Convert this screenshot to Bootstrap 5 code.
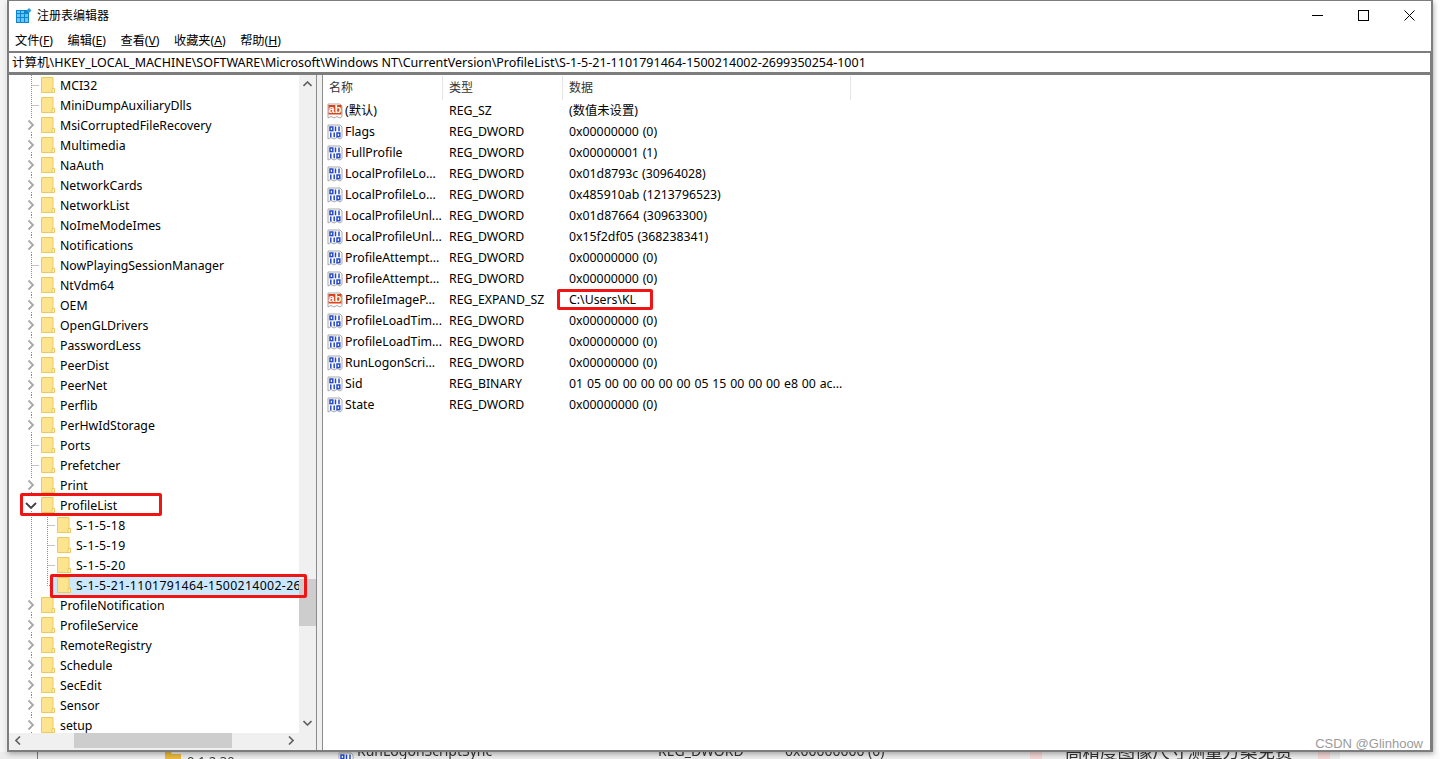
<!DOCTYPE html>
<html lang="zh-CN">

<head>
    <meta charset="UTF-8">
    <title>注册表编辑器</title>
    <link href="https://cdn.jsdelivr.net/npm/bootstrap@5.3.0/dist/css/bootstrap.min.css" rel="stylesheet">
    <style>
        html, body {
            height: 759px;
            overflow: hidden;
        }

        body {
            background: #fff;
            color: #000;
            font: 12.3px/20px "Noto Sans", "Noto Sans CJK SC", sans-serif;
        }

        .page-wrap {
            height: 759px;
            background: linear-gradient(90deg, #f4f4f4 0, #f4f4f4 6px, #fff 6px);
        }

        .reg-window {
            position: relative;
            z-index: 1;
            width: 1426px;
            height: 752px;
            margin-left: 7px;
            background: #f0f0f0;
            border: 2px solid #7d7d7d;
            border-top-width: 1px;
            box-shadow: 1px 2px 5px rgba(0, 0, 0, .3);
        }

        .title-bar {
            height: 30px;
            background: #fff;
            padding-left: 7px;
        }

        .title-text {
            margin-left: 5px;
            font-size: 12px;
        }

        .win-btn {
            width: 46px;
            height: 28px;
        }

        .win-controls {
            margin-right: -1px;
        }

        .menu-bar {
            height: 20px;
            background: #fff;
            padding-left: 6px;
            gap: 14.5px;
            font-size: 12.2px;
        }

        .addr-bar {
            height: 24px;
            background: #fff;
            border-top: 2px solid #7d7d7d;
            border-bottom: 3px solid #7d7d7d;
            border-right: 1px solid #7d7d7d;
            padding-left: 3px;
            line-height: 19px;
            font-size: 12.5px;
            white-space: nowrap;
        }

        .panes {
            height: 675px;
        }

        .tree-pane {
            width: 308px;
            background: #f0f0f0;
            border-right: 1px solid #8c8c8c;
        }

        .tree-body {
            height: 658px;
            overflow: hidden;
        }

        .tree-list {
            width: 290px;
            background: #fff;
            overflow: hidden;
        }

        .tree-row {
            height: 20px;
            white-space: nowrap;
            overflow: hidden;
        }

        .tree-indent {
            flex: 0 0 14px;
        }

        .tree-row svg {
            flex: none;
        }

        .gap-root {
            flex: 0 0 2px;
        }

        .gap-child {
            flex: 0 0 8px;
        }

        .gap-one {
            flex: 0 0 1px;
        }

        .tree-label {
            padding-left: 3px;
            padding-right: 3px;
            margin-left: 2px;
            margin-top: 2px;
        }

        .row-sid .tree-label {
            letter-spacing: .35px;
        }

        .row-selected {
            flex: 1;
            background: #cce8ff;
            height: 20px;
            min-width: 0;
            overflow: hidden;
            padding-left: 6px;
        }

        .vert-scroll {
            width: 17px;
            background: #f0f0f0;
        }

        .vert-track {
            flex: 1;
            padding-top: 487px;
        }

        .vert-thumb {
            height: 47px;
            background: #cdcdcd;
        }

        .scroll-arrow {
            width: 17px;
            height: 17px;
            flex: none;
        }

        .vert-scroll .arrow-down {
            margin-bottom: 2px;
        }

        .horz-scroll {
            height: 17px;
            background: #f0f0f0;
            padding-right: 17px;
        }

        .horz-scroll .scroll-arrow {
            height: 15px;
        }

        .horz-track {
            flex: 1;
            padding-left: 48px;
        }

        .horz-thumb {
            width: 158px;
            height: 15px;
            background: #cdcdcd;
        }

        .splitter {
            width: 5px;
            flex: none;
        }

        .list-pane {
            flex: 1;
            background: #fff;
            border-left: 1px solid #8c8c8c;
            border-right: 1px solid #7d7d7d;
            padding-top: 1px;
        }

        .list-head {
            height: 24px;
            line-height: 23px;
            color: #333;
            font-size: 12px;
        }

        .col-name {
            width: 120px;
            padding-left: 6px;
        }

        .col-type {
            width: 120px;
            padding-left: 6px;
        }

        .col-data {
            width: 288px;
            padding-left: 6px;
        }

        .list-head > div {
            border-right: 1px solid #e5e5e5;
        }

        .list-head > div,
        .list-row > div {
            flex: none;
        }

        .list-row {
            height: 21px;
            line-height: 21px;
            white-space: nowrap;
            font-size: 12.3px;
        }

        .list-row .col-name {
            padding-left: 4px;
            gap: 2px;
        }

        .list-row .col-data {
            word-spacing: .65px;
        }

        .list-row svg {
            flex: none;
        }

        .mark-box {
            position: absolute;
            border: 3px solid #f01414;
            border-radius: 2px;
            pointer-events: none;
        }

        .mark-tree-a {
            left: 11px;
            top: 492px;
            width: 142px;
            height: 23px;
        }

        .mark-tree-b {
            left: 41px;
            top: 573px;
            width: 257px;
            height: 24px;
        }

        .mark-list {
            left: 548px;
            top: 288px;
            width: 96px;
            height: 21px;
        }

        .watermark {
            position: absolute;
            right: 8px;
            bottom: -2px;
            color: #9b9b9b;
            font: 13px/17px "Liberation Sans", sans-serif;
        }

        .behind-strip {
            height: 7px;
            background: linear-gradient(90deg, #ececec 0, #ececec 1340px, #fbfbfb 1340px);
            overflow: hidden;
            font: 14px/14px "Noto Sans", "Noto Sans CJK SC", sans-serif;
            color: #333;
            filter: blur(.5px);
        }

        .behind-strip > * {
            flex: none;
            white-space: nowrap;
        }

        .behind-strip > span {
            margin-top: -8px;
        }

        .strip-line {
            margin-left: 37px;
            width: 128px;
            border-left: 1px solid #777;
        }

        .strip-folder {
            width: 173px;
        }

        .strip-folder b {
            margin-left: 6px;
            font-weight: 400;
            font-size: 13px;
            line-height: 14px;
            position: relative;
            top: 2px;
        }

        .strip-bin { width: 19px; }
        .strip-b { width: 301px; }
        .strip-c { width: 127px; }
        .strip-d { width: 245px; }
        .strip-e { width: 253px; font-size: 17.5px; }

        .strip-pink {
            width: 12px;
            height: 7px;
            background: #f3d5d5;
        }

        .strip-space {
            width: 23px;
        }
    </style>
</head>

<body>
    <div class="page-wrap">
        <div class="reg-window d-flex flex-column">

            <!-- Title bar -->
            <div class="title-bar d-flex align-items-center">
                <svg width="16" height="16" viewBox="0 0 16 16">
                    <rect x="0" y="2" width="13" height="13" fill="#0c86d0" />
                    <path d="M1 6h3v3H1zM5 6h3v3H5zM9 6h3v3H9zM1 10h3v4H1zM5 10h3v4H5zM9 10h3v4H9zM1 3h3v2H1zM5 3h3v2H5z" fill="#6cc5f2" />
                    <path d="M13 0l2.500 2.500L13 5l-2.500-2.500z" fill="#2a9fe0" />
                </svg>
                <span class="title-text">注册表编辑器</span>
                <div class="win-controls d-flex ms-auto align-self-start">
                    <div class="win-btn d-flex align-items-center justify-content-center">
                        <svg width="11" height="11" viewBox="0 0 11 11"><path d="M0 5.500h11" stroke="#000" /></svg>
                    </div>
                    <div class="win-btn d-flex align-items-center justify-content-center">
                        <svg width="11" height="11" viewBox="0 0 11 11"><rect x=".5" y=".5" width="10" height="10" fill="none" stroke="#000" /></svg>
                    </div>
                    <div class="win-btn d-flex align-items-center justify-content-center">
                        <svg width="11" height="11" viewBox="0 0 11 11"><path d="M.5.500l10 10M10.500.500l-10 10" stroke="#000" /></svg>
                    </div>
                </div>
            </div>

            <!-- Menu -->
            <div class="menu-bar d-flex align-items-center">
                <span>文件(<u>F</u>)</span>
                <span>编辑(<u>E</u>)</span>
                <span>查看(<u>V</u>)</span>
                <span>收藏夹(<u>A</u>)</span>
                <span>帮助(<u>H</u>)</span>
            </div>

            <!-- Address -->
            <div class="addr-bar">计算机\HKEY_LOCAL_MACHINE\SOFTWARE\Microsoft\Windows NT\CurrentVersion\ProfileList\S-1-5-21-1101791464-1500214002-2699350254-1001</div>

            <div class="panes d-flex">
                <!-- Key tree -->
                <div class="tree-pane d-flex flex-column">
                    <div class="tree-body d-flex">
                        <div class="tree-list" id="treeList"></div>
                        <div class="vert-scroll d-flex flex-column">
                            <div class="scroll-arrow d-flex align-items-center justify-content-center">
                                <svg width="9" height="6" viewBox="0 0 9 6"><path d="M.5 5l4-4 4 4" fill="none" stroke="#606060" stroke-width="1.600" /></svg>
                            </div>
                            <div class="vert-track"><div class="vert-thumb"></div></div>
                            <div class="scroll-arrow arrow-down d-flex align-items-center justify-content-center">
                                <svg width="9" height="6" viewBox="0 0 9 6"><path d="M.5 1l4 4 4-4" fill="none" stroke="#606060" stroke-width="1.600" /></svg>
                            </div>
                        </div>
                    </div>
                    <div class="horz-scroll d-flex">
                        <div class="scroll-arrow d-flex align-items-center justify-content-center">
                            <svg width="6" height="9" viewBox="0 0 6 9"><path d="M5 .500l-4 4 4 4" fill="none" stroke="#606060" stroke-width="1.600" /></svg>
                        </div>
                        <div class="horz-track"><div class="horz-thumb"></div></div>
                        <div class="scroll-arrow d-flex align-items-center justify-content-center">
                            <svg width="6" height="9" viewBox="0 0 6 9"><path d="M1 .500l4 4-4 4" fill="none" stroke="#606060" stroke-width="1.600" /></svg>
                        </div>
                    </div>
                </div>

                <div class="splitter"></div>

                <!-- Values -->
                <div class="list-pane">
                    <div class="list-head d-flex">
                        <div class="col-name">名称</div>
                        <div class="col-type">类型</div>
                        <div class="col-data">数据</div>
                    </div>
                    <div id="valueList"></div>
                </div>
            </div>

            <div class="mark-box mark-tree-a"></div>
            <div class="mark-box mark-tree-b"></div>
            <div class="mark-box mark-list"></div>
            <div class="watermark">CSDN @Glinhoow</div>
        </div>

        <!-- Whatever is behind the window -->
        <div class="behind-strip d-flex" id="behindStrip">
            <div class="strip-line"></div>
            <div class="strip-folder d-flex align-items-start">
                <svg width="16" height="7" viewBox="0 0 16 7"><path d="M0 0h6l1 2h9v5H0z" fill="#e9b93c" /></svg>
                <b>0.1.2.30</b>
            </div>
            <div class="strip-bin" id="stripBin"></div>
            <span class="strip-b">RunLogonScriptSync</span>
            <span class="strip-c">REG_DWORD</span>
            <span class="strip-d">0x00000000 (0)</span>
            <div class="strip-pink"></div>
            <div class="strip-space"></div>
            <span class="strip-e">高精度图像尺寸测量方案免费</span>
            <div class="strip-pink"></div>
        </div>
    </div>

    <script>
        // type: 1 = has children, 0 = leaf, 2 = expanded, 3 = child key, 4 = selected child key
        const treeData = [
            ["MCI32", 0], ["MiniDumpAuxiliaryDlls", 0], ["MsiCorruptedFileRecovery", 1], ["Multimedia", 1],
            ["NaAuth", 1], ["NetworkCards", 1], ["NetworkList", 1], ["NoImeModeImes", 1], ["Notifications", 1],
            ["NowPlayingSessionManager", 0], ["NtVdm64", 1], ["OEM", 1], ["OpenGLDrivers", 1], ["PasswordLess", 1],
            ["PeerDist", 1], ["PeerNet", 1], ["Perflib", 1], ["PerHwIdStorage", 1], ["Ports", 0], ["Prefetcher", 0],
            ["Print", 1], ["ProfileList", 2], ["S-1-5-18", 3], ["S-1-5-19", 3], ["S-1-5-20", 3],
            ["S-1-5-21-1101791464-1500214002-2699350254-1001", 4], ["ProfileNotification", 1], ["ProfileService", 1],
            ["RemoteRegistry", 1], ["Schedule", 1], ["SecEdit", 1], ["Sensor", 1], ["setup", 1]
        ];

        const valueData = [
            ["(默认)", "REG_SZ", "(数值未设置)", "ab"],
            ["Flags", "REG_DWORD", "0x00000000 (0)", "bin"],
            ["FullProfile", "REG_DWORD", "0x00000001 (1)", "bin"],
            ["LocalProfileLo...", "REG_DWORD", "0x01d8793c (30964028)", "bin"],
            ["LocalProfileLo...", "REG_DWORD", "0x485910ab (1213796523)", "bin"],
            ["LocalProfileUnl...", "REG_DWORD", "0x01d87664 (30963300)", "bin"],
            ["LocalProfileUnl...", "REG_DWORD", "0x15f2df05 (368238341)", "bin"],
            ["ProfileAttempt...", "REG_DWORD", "0x00000000 (0)", "bin"],
            ["ProfileAttempt...", "REG_DWORD", "0x00000000 (0)", "bin"],
            ["ProfileImageP...", "REG_EXPAND_SZ", "C:\\Users\\KL", "ab"],
            ["ProfileLoadTim...", "REG_DWORD", "0x00000000 (0)", "bin"],
            ["ProfileLoadTim...", "REG_DWORD", "0x00000000 (0)", "bin"],
            ["RunLogonScri...", "REG_DWORD", "0x00000000 (0)", "bin"],
            ["Sid", "REG_BINARY", "01 05 00 00 00 00 00 05 15 00 00 00 e8 00 ac...", "bin"],
            ["State", "REG_DWORD", "0x00000000 (0)", "bin"]
        ];

        const dots = '#8a8a8a';

        const folderIcon =
            '<svg width="14" height="16" viewBox="0 0 14 16">' +
            '<path d="M.5.500h11.500v15H.5z" fill="#fde48f" stroke="#efc85a"/>' +
            '<path d="M11 15.500v-4h2.500v4z" fill="#fff2c4" stroke="#efc85a"/>' +
            '</svg>';

        // root level connector: dotted line at the middle, chevron on keys with children
        function rootTwisty(type) {
            let inner = '';
            if (type === 0) {
                inner = `<path d="M8.500 0v20M8.500 10.500h7" stroke="${dots}" stroke-dasharray="1 1"/>`;
            } else if (type === 1) {
                inner = `<path d="M8.500 0v3M8.500 17v3" stroke="${dots}" stroke-dasharray="1 1"/>` +
                    '<path d="M5.500 5.500l4.500 4.500-4.500 4.500" fill="none" stroke="#a6a6a6" stroke-width="1.800"/>';
            } else if (type === 2) {
                inner = '<path d="M3 8l5 5 5-5" fill="none" stroke="#404040" stroke-width="1.800"/>' +
                    `<path d="M8.500 16v4" stroke="${dots}" stroke-dasharray="1 1"/>`;
            } else {
                inner = `<path d="M8.500 0v20" stroke="${dots}" stroke-dasharray="1 1"/>`;
            }
            return `<svg width="16" height="20" viewBox="0 0 16 20">${inner}</svg>`;
        }

        function childTwisty(last) {
            if (last) {
                return `<svg width="4" height="20" viewBox="0 0 4 20"><path d="M.500 0v10.500h4" fill="none" stroke="${dots}" stroke-dasharray="1 1"/></svg>`;
            }
            return `<svg width="9" height="20" viewBox="0 0 9 20"><path d="M.500 0v20M.500 10.500h8" stroke="${dots}" stroke-dasharray="1 1"/></svg><span class="gap-one"></span>`;
        }

        const treeList = document.getElementById("treeList");
        treeData.forEach(item => {
            const type = item[1];
            const isChild = type === 3 || type === 4;
            let html = '<div class="tree-indent"></div>' + rootTwisty(type);
            if (isChild) {
                html += '<span class="gap-child"></span>' + childTwisty(type === 4);
            } else {
                html += '<span class="gap-root"></span>';
            }
            const label = `<span class="tree-label">${item[0]}</span>`;
            if (type === 4) {
                html += `<div class="row-selected d-flex align-items-center">${folderIcon}${label}</div>`;
            } else {
                html += folderIcon + label;
            }
            treeList.innerHTML += `<div class="tree-row d-flex align-items-center${isChild ? ' row-sid' : ''}">${html}</div>`;
        });

        const paper = '<path d="M1 1h12l2 2v10.500l-2 1.500-3-1.500-3 1.500-3-1.500-3 1.500z" fill="#fff" stroke="#a8a8a8"/>';

        const abIcon =
            '<svg width="16" height="16" viewBox="0 0 16 16">' + paper +
            '<rect x="1.500" y="2" width="13" height="9.500" fill="#d9431e"/>' +
            '<text x="8" y="10" text-anchor="middle" font-family="Liberation Sans" font-weight="700" font-size="11" fill="#fff">ab</text>' +
            '</svg>';

        const binIcon =
            '<svg width="16" height="16" viewBox="0 0 16 16">' + paper +
            '<g fill="none" stroke="#2448c8" stroke-width="1.500">' +
            '<rect x="3" y="3" width="2.800" height="3.600"/><path d="M8.500 2.500v4.800M12 2.500v4.800"/>' +
            '<path d="M3.800 8.500v4.800M7.200 8.500v4.800"/><rect x="10" y="9" width="2.800" height="3.600"/>' +
            '</g></svg>';

        const valueList = document.getElementById("valueList");
        valueData.forEach(item => {
            valueList.innerHTML += `<div class="list-row d-flex">
                <div class="col-name d-flex align-items-center">${item[3] === "ab" ? abIcon : binIcon}<span>${item[0]}</span></div>
                <div class="col-type">${item[1]}</div>
                <div class="col-data">${item[2]}</div>
            </div>`;
        });

        document.getElementById("stripBin").innerHTML = binIcon;
    </script>
    <script src="https://cdn.jsdelivr.net/npm/bootstrap@5.3.0/dist/js/bootstrap.bundle.min.js"></script>
</body>

</html>
